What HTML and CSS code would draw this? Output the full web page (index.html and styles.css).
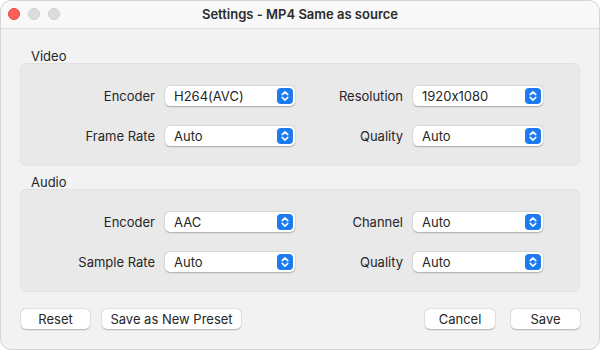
FILE: index.html
```html
<!DOCTYPE html>
<html>
<head>
<meta charset="utf-8">
<link rel="stylesheet" href="styles.css">
</head>
<body>
<div class="window">
  <div class="titlebar">
    <div class="lights">
      <span class="light red"></span>
      <span class="light gray"></span>
      <span class="light gray"></span>
    </div>
    <div class="title">Settings - MP4 Same as source</div>
  </div>
  <div class="content">
    <div class="section video">
      <div class="section-label">Video</div>
      <div class="group">
        <div class="label">Encoder</div>
        <div class="select"><span>H264(AVC)</span><span class="stepper"><svg width="16" height="16" viewBox="0 0 16 16"><path d="M5.2 6.6 8 3.9l2.8 2.7M5.2 9.4 8 12.1l2.8-2.7" fill="none" stroke="#fff" stroke-width="1.5" stroke-linecap="round" stroke-linejoin="round"/></svg></span></div>
        <div class="label">Resolution</div>
        <div class="select"><span>1920x1080</span><span class="stepper"><svg width="16" height="16" viewBox="0 0 16 16"><path d="M5.2 6.6 8 3.9l2.8 2.7M5.2 9.4 8 12.1l2.8-2.7" fill="none" stroke="#fff" stroke-width="1.5" stroke-linecap="round" stroke-linejoin="round"/></svg></span></div>
        <div class="label">Frame Rate</div>
        <div class="select"><span>Auto</span><span class="stepper"><svg width="16" height="16" viewBox="0 0 16 16"><path d="M5.2 6.6 8 3.9l2.8 2.7M5.2 9.4 8 12.1l2.8-2.7" fill="none" stroke="#fff" stroke-width="1.5" stroke-linecap="round" stroke-linejoin="round"/></svg></span></div>
        <div class="label">Quality</div>
        <div class="select"><span>Auto</span><span class="stepper"><svg width="16" height="16" viewBox="0 0 16 16"><path d="M5.2 6.6 8 3.9l2.8 2.7M5.2 9.4 8 12.1l2.8-2.7" fill="none" stroke="#fff" stroke-width="1.5" stroke-linecap="round" stroke-linejoin="round"/></svg></span></div>
      </div>
    </div>
    <div class="section audio">
      <div class="section-label">Audio</div>
      <div class="group">
        <div class="label">Encoder</div>
        <div class="select"><span>AAC</span><span class="stepper"><svg width="16" height="16" viewBox="0 0 16 16"><path d="M5.2 6.6 8 3.9l2.8 2.7M5.2 9.4 8 12.1l2.8-2.7" fill="none" stroke="#fff" stroke-width="1.5" stroke-linecap="round" stroke-linejoin="round"/></svg></span></div>
        <div class="label">Channel</div>
        <div class="select"><span>Auto</span><span class="stepper"><svg width="16" height="16" viewBox="0 0 16 16"><path d="M5.2 6.6 8 3.9l2.8 2.7M5.2 9.4 8 12.1l2.8-2.7" fill="none" stroke="#fff" stroke-width="1.5" stroke-linecap="round" stroke-linejoin="round"/></svg></span></div>
        <div class="label">Sample Rate</div>
        <div class="select"><span>Auto</span><span class="stepper"><svg width="16" height="16" viewBox="0 0 16 16"><path d="M5.2 6.6 8 3.9l2.8 2.7M5.2 9.4 8 12.1l2.8-2.7" fill="none" stroke="#fff" stroke-width="1.5" stroke-linecap="round" stroke-linejoin="round"/></svg></span></div>
        <div class="label">Quality</div>
        <div class="select"><span>Auto</span><span class="stepper"><svg width="16" height="16" viewBox="0 0 16 16"><path d="M5.2 6.6 8 3.9l2.8 2.7M5.2 9.4 8 12.1l2.8-2.7" fill="none" stroke="#fff" stroke-width="1.5" stroke-linecap="round" stroke-linejoin="round"/></svg></span></div>
      </div>
    </div>
    <div class="buttons">
      <div class="left">
        <button class="btn reset">Reset</button>
        <button class="btn preset">Save as New Preset</button>
      </div>
      <div class="right">
        <button class="btn cancel">Cancel</button>
        <button class="btn save">Save</button>
      </div>
    </div>
  </div>
</div>
</body>
</html>
```

FILE: styles.css
```css
* { box-sizing: border-box; }
html, body {
  margin: 0;
  padding: 0;
  background: #ffffff;
}
body {
  width: 600px;
  height: 350px;
  overflow: hidden;
  font-family: Inter, "Helvetica Neue", "Liberation Sans", sans-serif;
  font-feature-settings: "calt" 0;
  font-size: 13px;
  color: #262626;
}
.window {
  width: 600px;
  height: 350px;
  border: 1px solid #d4d4d4;
  border-radius: 11px;
  background: #f2f2f2;
  overflow: hidden;
  display: flex;
  flex-direction: column;
}
.titlebar {
  height: 28px;
  flex: none;
  background: #f8f8f8;
  border-bottom: 1px solid #dedede;
  display: flex;
  align-items: center;
  position: relative;
}
.lights {
  display: flex;
  gap: 8px;
  padding-left: 7px;
  margin-top: -1px;
}
.light {
  width: 12px;
  height: 12px;
  border-radius: 50%;
  display: block;
}
.light.red { background: #fe5f57; border: 0.5px solid #e2463f; }
.light.gray { background: #dcdcdc; border: 0.5px solid #d0d0d0; }
.title {
  position: absolute;
  left: 0;
  right: 0;
  top: 0;
  height: 27px;
  line-height: 26px;
  text-align: center;
  font-weight: 600;
  font-size: 13px;
  color: #2b2b2b;
  pointer-events: none;
}
.content {
  padding: 17px 19px 0 19px;
  display: flex;
  flex-direction: column;
}
.section-label {
  padding-left: 11px;
  height: 17px;
  line-height: 21px;
}
.audio { margin-top: 6px; }
.group {
  background: #e9e9e9;
  border: 1px solid #e1e1e1;
  border-radius: 6px;
  display: grid;
  grid-template-columns: 134px 130px 98px 130px;
  column-gap: 10px;
  row-gap: 20px;
  align-items: center;
  padding: 22px 0 19px 0;
}
.label {
  text-align: right;
  white-space: nowrap;
}
.select {
  height: 20px;
  background: #ffffff;
  border-radius: 5px;
  box-shadow: 0 0.5px 1.5px rgba(0,0,0,0.25), 0 0 0 0.5px rgba(0,0,0,0.06);
  display: flex;
  align-items: center;
  justify-content: space-between;
  padding: 0 2px 0 9px;
}
.stepper {
  width: 16px;
  height: 16px;
  border-radius: 4px;
  background: #1d7bf2;
  display: flex;
}
.buttons {
  display: flex;
  justify-content: space-between;
  margin-top: 17px;
  padding: 0 0 0 1px;
}
.left, .right { display: flex; }
.left { gap: 12px; }
.right { gap: 16px; }
.btn {
  font-family: inherit;
  font-feature-settings: "calt" 0;
  font-size: 13px;
  color: #262626;
  height: 20px;
  background: #ffffff;
  border: none;
  border-radius: 5px;
  box-shadow: 0 0.5px 1.5px rgba(0,0,0,0.25), 0 0 0 0.5px rgba(0,0,0,0.06);
  padding: 0;
  line-height: 20px;
}
.reset { width: 69px; }
.preset { width: 139px; }
.cancel { width: 70px; }
.save { width: 69px; }
```
